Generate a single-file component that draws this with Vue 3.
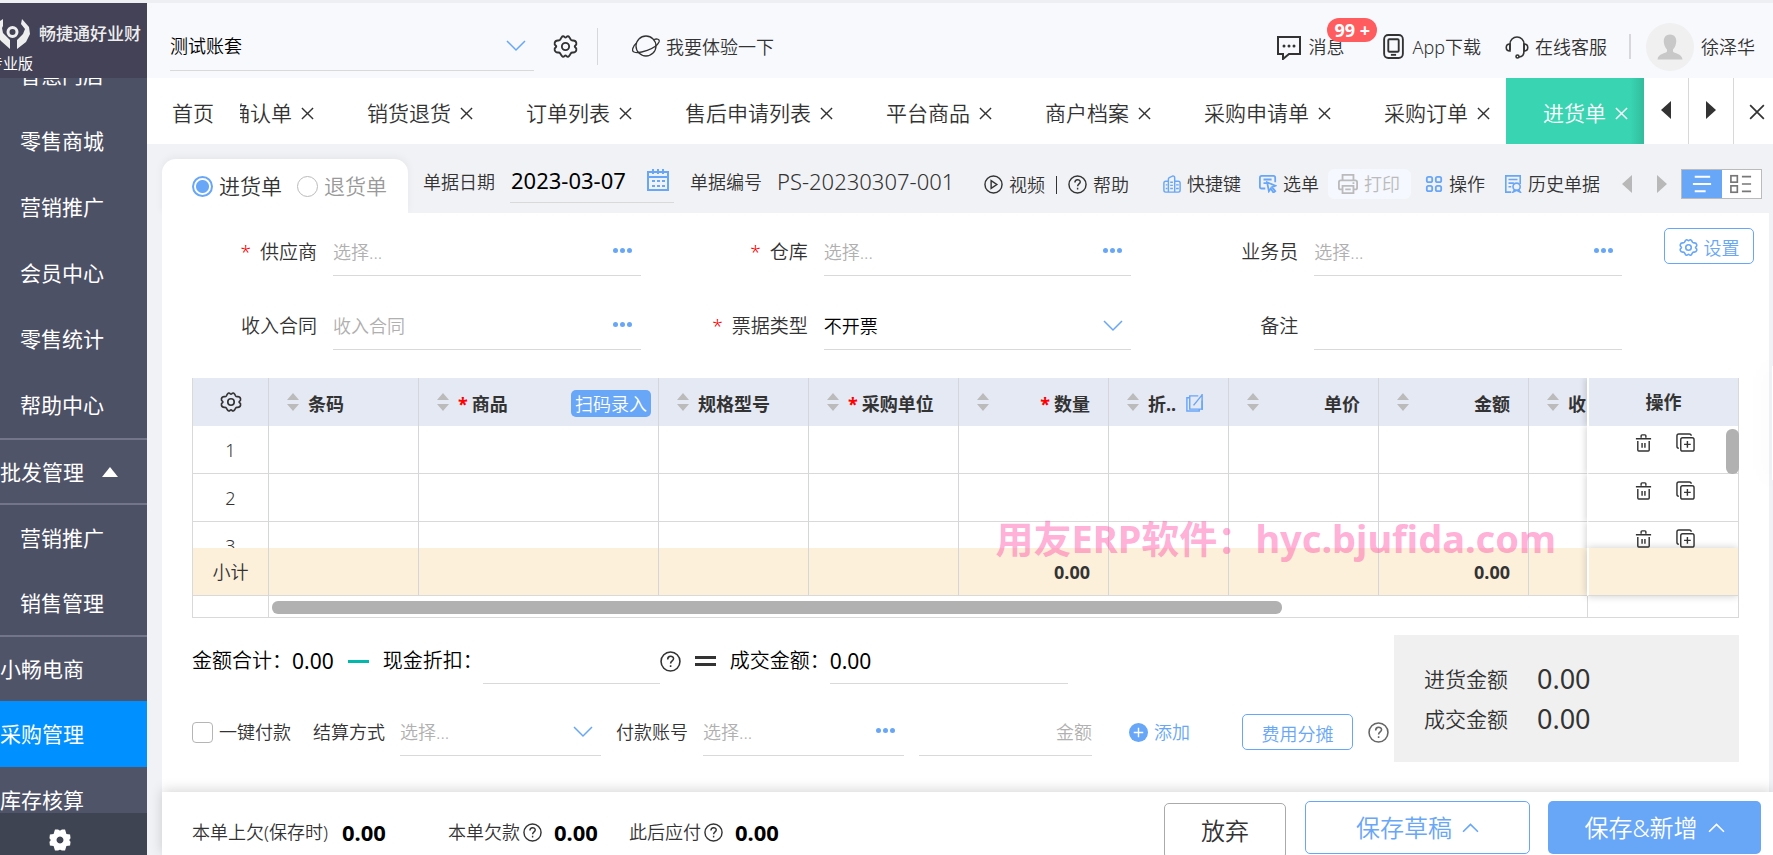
<script setup>
import { ref, h } from 'vue'

const shops = ['智慧门店', '零售商城', '营销推广', '会员中心', '零售统计', '帮助中心']
const wholesale = ['营销推广', '销售管理']
const modules = ['小畅电商', '采购管理', '库存核算']
const tabs = ['确认单', '销货退货', '订单列表', '售后申请列表', '平台商品', '商户档案', '采购申请单', '采购订单', '进货单']
const docType = ref('in')
const date = ref('2023-03-07')
const docNo = ref('PS-20230307-001')
const deal = ref('0.00')
const paid = ref(false)
const rows = [1, 2, 3]

const columns = [
  { label: '条码' },
  { label: '商品', required: true, scan: true },
  { label: '规格型号' },
  { label: '采购单位', required: true },
  { label: '数量', required: true, right: true, total: '0.00' },
  { label: '折..', edit: true },
  { label: '单价', right: true },
  { label: '金额', right: true, total: '0.00' },
  { label: '收' },
]

const shapes = {
  gear: [24, '<path d="M8 3.5Q9.5 1.2 11 2.8 12 3.8 13 2.8 14.5 1.2 16 3.5L17 5.3Q17.600 6.300 19 6.200 21.800 6 22.400 8.500 22.800 10.300 21.400 11.100 20.300 12 21.400 12.900 22.800 13.700 22.400 15.500 21.800 18 19 17.800 17.600 17.700 17 18.700L16 20.500Q14.500 22.800 13 21.200 12 20.200 11 21.200 9.500 22.800 8 20.500L7 18.700Q6.400 17.700 5 17.800 2.200 18 1.600 15.500 1.200 13.700 2.600 12.900 3.700 12 2.600 11.100 1.200 10.300 1.600 8.500 2.200 6 5 6.200 6.400 6.300 7 5.300Z"/><circle cx="12" cy="12" r="3.500"/>'],
  gearFill: [24, '<path fill="currentColor" stroke="none" fill-rule="evenodd" d="M6.500 .5h3.500q2 2 4 0h3.500l1.500 5 4 .5.5 4q-2.500 2 0 4l-.5 4-4 .5-1.500 5H14q-2-2-4 0H6.500L5 18.500l-4-.5-.5-4q2.500-2 0-4L1 6l4-.5zM12 8.200a3.800 3.800 0 1 0 .01 0z"/>'],
  down: [20, '<path d="M1 5l9 9 9-9"/>'],
  up: [16, '<path d="M1 12l7-7 7 7"/>'],
  close: [14, '<path d="M1 1l12 12M13 1L1 13"/>'],
  planet: [28, '<circle cx="14" cy="13" r="10"/><path d="M5 9.500C1 13-1 18 2 19c5 2 22-3 25-10 1-3-2-3.500-5-2.500"/>'],
  chat: [26, '<path d="M2 3h22v17H13l-6 5v-5H2z"/><circle cx="8" cy="12" r="1.500" fill="currentColor" stroke="none"/><circle cx="13" cy="12" r="1.500" fill="currentColor" stroke="none"/><circle cx="18" cy="12" r="1.500" fill="currentColor" stroke="none"/>'],
  phone: [24, '<rect x="3" y="1" width="18" height="22" rx="4"/><rect x="7" y="5" width="10" height="12" rx="1"/><path d="M9.500 20h5"/>'],
  headset: [24, '<path d="M5 15V9a7 7 0 0 1 14 0v7c0 4-2 6-5 6"/><path d="M5 9c-5 0-5 7 0 7zM19 9c5 0 5 7 0 7z"/><circle cx="12.500" cy="21.500" r="1.500"/>'],
  calendar: [22, '<path d="M1 3h20v18H1zM1 8h20"/><path d="M6 0v5M11 0v5M16 0v5M5 12h3M10 12h3M15 12h3M5 17h3M10 17h3M15 17h3"/>'],
  play: [20, '<circle cx="10" cy="10" r="9"/><path d="M7.500 6v8l6-4z"/>'],
  help: [20, '<circle cx="10" cy="10" r="9"/><path d="M7.300 8c0-4 5.600-3.800 5.600-.6 0 2-2.800 2-2.800 4.400M10.100 13.500v1.800"/>'],
  building: [20, '<path d="M6 19H3a2 2 0 0 1-2-2V9a2 2 0 0 1 2-2h3V5a2 2 0 0 1 1-2l4-2q2 0 2 2v16M6 7v12h11a2 2 0 0 0 2-2V9a2 2 0 0 0-2-2h-4"/><path d="M3 11h2M3 15h2M8 8h3M8 11.500h3M8 15h3M14.500 11h3M14.500 15h3"/>'],
  pick: [20, '<path d="M7 15H3a2 2 0 0 1-2-2V3a2 2 0 0 1 2-2h13a2 2 0 0 1 2 2v5M5 5h9M5 9h4"/><path d="M9 8l9 4-3.500 1.500L18 18l-2 1.500-3-4.500-2 3z"/>'],
  printer: [22, '<path d="M5 7V1h12v6M5 17H3a2 2 0 0 1-2-2V9a2 2 0 0 1 2-2h16a2 2 0 0 1 2 2v6a2 2 0 0 1-2 2h-2"/><path d="M5 13h12v8H5zM8 17h6M16 10h2"/>'],
  four: [20, '<rect x="2" y="2" width="6" height="6" rx="2"/><rect x="12" y="2" width="6" height="6" rx="2"/><rect x="2" y="12" width="6" height="6" rx="2"/><rect x="12" y="12" width="6" height="6" rx="2"/>'],
  history: [20, '<path d="M8 19H2V1h16v9M5 5h10M5 9h6M5 13h3"/><circle cx="14" cy="13" r="4"/><path d="M12 16l-2 3 4-2 4 2-2-3"/>'],
  edit: [20, '<path d="M14 3H5v14h13V8M5 5H2v14h13v-2"/><path d="M9 13l9-11M18 1v17"/>'],
  trash: [20, '<path d="M2 6h16M4 8.500V18q0 1 1 1h10q1 0 1-1V8.500M7.500 5V3q0-1 1-1h3q1 0 1 1v2M8.500 10.500v5M11.500 10.500v5"/>'],
  copy: [20, '<rect x="5" y="5" width="14" height="14" rx="2"/><path d="M3 16q-2 0-2-2V3q0-2 2-2h11q2 0 2 2M12 8.500v7M8.500 12h7"/>'],
  lines: [22, '<path d="M3 3h17M1 11h20M3 19h12"/>'],
  list: [24, '<rect x="1" y="3" width="7" height="7"/><rect x="1" y="14" width="7" height="7"/><path d="M13 4h10M13 12h10M13 20h10"/>'],
  left: [18, '<path d="M14 0v18L4 9z" fill="currentColor" stroke="none"/>'],
  right: [18, '<path d="M4 0v18l10-9z" fill="currentColor" stroke="none"/>'],
  plus: [20, '<circle cx="10" cy="10" r="10" fill="currentColor" stroke="none"/><path d="M5 10h10M10 5v10" stroke="#fff"/>'],
}

const Icon = (props) =>
  h('svg', {
    viewBox: `0 0 ${shapes[props.name][0]} ${shapes[props.name][0]}`,
    width: props.size,
    height: props.size,
    fill: 'none',
    stroke: 'currentColor',
    'stroke-width': props.weight || 1.5,
    'aria-hidden': 'true',
    innerHTML: shapes[props.name][1],
  })
Icon.props = ['name', 'size', 'weight']
</script>

<template>
  <div class="page">
    <aside class="side">
      <div class="brand">
        <div class="brand-row">
          <svg class="mark" width="31" height="32" viewBox="0 0 31 32" aria-hidden="true">
            <path d="M3 1v7l-1 2 1 5 7 7v9L1 23l-6-8 2-10z" fill="#eee" />
            <path d="M22 1l7 8 1 7-4 8-9 7v-9l6-6 2-5-4-5z" fill="#eee" />
            <circle cx="12.500" cy="14" r="4.500" fill="none" stroke="#eee" stroke-width="3" />
          </svg>
          <strong>畅捷通好业财</strong>
        </div>
        <span class="edition">专业版</span>
      </div>
      <nav class="menu">
        <a v-for="s in shops" :key="s" href="#" class="sub">{{ s }}</a>
        <a href="#" class="group">批发管理<i class="caret"></i></a>
        <a v-for="s in wholesale" :key="s" href="#" class="sub short">{{ s }}</a>
        <a v-for="(m, i) in modules" :key="m" href="#" class="module" :class="{ first: i === 0, current: i === 1 }">{{ m }}</a>
      </nav>
      <button class="side-foot" aria-label="设置"><Icon name="gearFill" size="22" /></button>
    </aside>

    <div class="main">
      <header class="top">
        <div class="pick account">
          <select aria-label="账套"><option>测试账套</option></select>
          <Icon name="down" size="20" class="blue" />
        </div>
        <button class="plain" aria-label="账套设置"><Icon name="gear" size="25" weight="1.800" /></button>
        <i class="rule tall"></i>
        <a href="#" class="link try"><Icon name="planet" size="28" weight="1.300" />我要体验一下</a>
        <a href="#" class="link msg"><Icon name="chat" size="26" weight="2" />消息<b class="badge">99 +</b></a>
        <a href="#" class="link app"><Icon name="phone" size="25" weight="1.800" />App下载</a>
        <a href="#" class="link service"><Icon name="headset" size="24" weight="1.600" />在线客服</a>
        <i class="rule"></i>
        <a href="#" class="link user">
          <svg width="48" height="48" viewBox="0 0 48 48" aria-hidden="true">
            <circle cx="24" cy="24" r="24" fill="#f0f0f0" />
            <path d="M24 11.500c-5 0-7 4-6 9 .5 3 2 5 3 6v2c-1 2-9 2-9.500 8h25c-.5-6-8.500-6-9.500-8v-2c1-1 2.500-3 3-6 1-5-1-9-6-9z" fill="#c8c8c8" />
          </svg>徐泽华</a>
      </header>

      <nav class="tabs">
        <a href="#" class="home">首页</a>
        <div class="strip">
          <div v-for="(t, i) in tabs" :key="t" class="tab" :class="{ on: i === tabs.length - 1 }">
            <a href="#">{{ t }}</a><button :aria-label="'关闭' + t"><Icon name="close" size="13" /></button>
          </div>
        </div>
        <button class="ctl" aria-label="向左"><Icon name="left" size="18" /></button>
        <button class="ctl" aria-label="向右"><Icon name="right" size="18" /></button>
        <button class="ctl last" aria-label="关闭全部"><Icon name="close" size="16" weight="1.500" /></button>
      </nav>

      <div class="docbar">
        <div class="kinds">
          <label><input v-model="docType" type="radio" value="in" />进货单</label>
          <label class="dim"><input v-model="docType" type="radio" value="back" />退货单</label>
        </div>
        <div class="docinfo">
          <label for="d">单据日期</label>
          <div class="date"><input id="d" v-model="date" /><Icon name="calendar" size="22" weight="2" class="blue" /></div>
          <label for="n">单据编号</label>
          <input id="n" v-model="docNo" class="docno" />
        </div>
        <div class="helps">
          <button><Icon name="play" size="19" />视频</button><i></i>
          <button><Icon name="help" size="19" />帮助</button>
        </div>
        <div class="tools">
          <button class="keys"><Icon name="building" size="18" weight="1.600" class="blue" />快捷键</button>
          <button class="choose"><Icon name="pick" size="18" weight="2" class="blue" />选单</button>
          <button class="print" disabled><Icon name="printer" size="20" weight="2" />打印</button>
          <button class="ops"><Icon name="four" size="18" weight="2" class="blue" />操作</button>
          <button><Icon name="history" size="18" weight="1.800" class="blue" />历史单据</button>
          <button class="step prev" aria-label="上一张"><Icon name="left" size="18" /></button>
          <button class="step" aria-label="下一张"><Icon name="right" size="18" /></button>
          <div class="views">
            <button class="on" aria-label="表单视图"><Icon name="lines" size="20" weight="2" /></button>
            <button aria-label="列表视图"><Icon name="list" size="22" weight="1.800" /></button>
          </div>
        </div>
      </div>

      <main class="sheet">
        <div class="head">
          <div class="fields">
            <div class="field"><label for="f1"><em>*</em>供应商</label><div class="box"><input id="f1" placeholder="选择..." /><button class="dots" aria-label="选择供应商"><i></i><i></i><i></i></button></div></div>
            <div class="field"><label for="f2"><em>*</em>仓库</label><div class="box"><input id="f2" placeholder="选择..." /><button class="dots" aria-label="选择仓库"><i></i><i></i><i></i></button></div></div>
            <div class="field"><label for="f3">业务员</label><div class="box"><input id="f3" placeholder="选择..." /><button class="dots" aria-label="选择业务员"><i></i><i></i><i></i></button></div></div>
            <div class="field"><label for="f4">收入合同</label><div class="box"><input id="f4" placeholder="收入合同" /><button class="dots" aria-label="选择合同"><i></i><i></i><i></i></button></div></div>
            <div class="field"><label for="f5"><em>*</em>票据类型</label><div class="pick box"><select id="f5"><option>不开票</option></select><Icon name="down" size="20" class="blue" /></div></div>
            <div class="field"><label for="f6">备注</label><div class="box"><input id="f6" /></div></div>
          </div>
          <button class="outline config"><Icon name="gear" size="19" weight="2" />设置</button>
        </div>

        <div class="gridwrap">
          <table>
            <thead>
              <tr>
                <th class="no"><button class="plain" aria-label="列设置"><Icon name="gear" size="22" weight="1.800" /></button></th>
                <th v-for="c in columns" :key="c.label" :class="{ right: c.right }">
                  <span class="sort"><i></i><i></i></span>
                  <span class="name"><em v-if="c.required">*</em>{{ c.label }}</span>
                  <button v-if="c.scan" class="scan">扫码录入</button>
                  <Icon v-if="c.edit" name="edit" size="19" weight="1.500" class="blue" />
                </th>
                <th class="act">操作</th>
              </tr>
            </thead>
            <tbody>
              <tr v-for="r in rows" :key="r">
                <td class="no">{{ r }}</td>
                <td v-for="c in columns" :key="c.label"></td>
                <td class="act">
                  <button class="plain" aria-label="删除行"><Icon name="trash" size="19" /></button>
                  <button class="plain" aria-label="复制行"><Icon name="copy" size="19" /></button>
                </td>
              </tr>
            </tbody>
            <tfoot>
              <tr>
                <td class="no">小计</td>
                <td v-for="c in columns" :key="c.label" class="sum">{{ c.total }}</td>
                <td class="act"></td>
              </tr>
            </tfoot>
          </table>
          <div class="hscroll"><span></span><div><i></i></div><span></span></div>
          <i class="vthumb"></i>
          <div class="mark-text">用友ERP软件：<span>hyc.bjufida.com</span></div>
        </div>

        <div class="settle">
          <div class="lines">
            <div class="calc">
              <span>金额合计：</span><output>0.00</output><i class="minus"></i>
              <label for="c1">现金折扣：</label><input id="c1" class="cash" />
              <Icon name="help" size="21" weight="1.500" /><i class="equal"></i>
              <label for="c2">成交金额：</label><input id="c2" v-model="deal" class="deal" />
            </div>
            <div class="pay">
              <label class="tick"><input v-model="paid" type="checkbox" />一键付款</label>
              <label for="p1" class="way">结算方式</label>
              <div class="pick box w200 empty"><select id="p1"><option>选择...</option></select><Icon name="down" size="20" class="blue" /></div>
              <label for="p2" class="acct">付款账号</label>
              <div class="box w200"><input id="p2" placeholder="选择..." /><button class="dots" aria-label="选择账号"><i></i><i></i><i></i></button></div>
              <div class="box amount"><input placeholder="金额" aria-label="金额" /></div>
              <button class="add"><Icon name="plus" size="19" />添加</button>
              <button class="outline share">费用分摊</button>
              <Icon name="help" size="21" weight="1.500" class="gray" />
            </div>
          </div>
          <dl class="totals">
            <div><dt>进货金额</dt><dd>0.00</dd></div>
            <div><dt>成交金额</dt><dd>0.00</dd></div>
          </dl>
        </div>
      </main>

      <footer class="foot">
        <span>本单上欠(保存时)</span><b class="g1">0.00</b>
        <span>本单欠款</span><Icon name="help" size="19" weight="1.500" /><b class="g2">0.00</b>
        <span>此后应付</span><Icon name="help" size="19" weight="1.500" /><b>0.00</b>
        <div class="acts">
          <button class="drop">放弃</button>
          <button class="draft">保存草稿<Icon name="up" size="17" /></button>
          <button class="save">保存&amp;新增<Icon name="up" size="17" /></button>
        </div>
      </footer>
    </div>
    <i class="float"></i>
  </div>
</template>

<style>
body { margin: 0; background: #fff; }
</style>

<style scoped>
* { box-sizing: border-box; }
.page {
  display: flex; height: 100vh; overflow: hidden; position: relative; border-top: 3px solid #eeeff2;
  font: 350 18px/26px "Noto Sans", "Noto Sans CJK SC", sans-serif; color: #333;
}
a { color: inherit; text-decoration: none; }
button, input, select { font: inherit; color: inherit; border: 0; background: none; padding: 0; margin: 0; outline: 0; min-width: 0; }
button { display: inline-flex; align-items: center; justify-content: center; gap: 6px; white-space: nowrap; flex: none; }
label, span { white-space: nowrap; }
:deep(svg), svg { display: block; flex: none; }
.blue { color: #68a6f8; }
.gray { color: #666; }
em { font-style: normal; color: #f00; }
input::placeholder { color: #b0b0b0; opacity: 1; }

.side { width: 147px; flex: none; display: flex; flex-direction: column; background: #4d5166; color: #fff; font-weight: 400; }
.brand { height: 75px; flex: none; background: #434257; overflow: hidden; position: relative; z-index: 1; padding-top: 14px; }
.brand-row { display: flex; align-items: center; gap: 8px; height: 34px; }
.brand strong { font-size: 17px; font-weight: 500; color: #eee; white-space: nowrap; }
.edition { display: block; margin-left: -12px; font-size: 15px; line-height: 24px; }
.menu { flex: 1; min-height: 0; display: flex; flex-direction: column; overflow: hidden; font-size: 21px; }
.menu a { flex: none; height: 66px; display: flex; align-items: center; }
.menu .sub { padding-left: 20px; }
.menu .sub:first-child { margin-top: -36px; }
.menu .short { height: 65px; }
.menu .group { height: 67px; background: #505469; border-top: 2px solid #73768a; border-bottom: 2px solid #73768a; }
.menu .module { background: #505469; }
.menu .first { border-top: 2px solid #73768a; }
.menu .current { background: #0090ff; }
.caret { margin-left: 18px; border: 8px solid transparent; border-top: 0; border-bottom: 10px solid #fff; }
.side-foot { height: 42px; background: #3f4452; justify-content: flex-start; padding: 12px 0 0 49px; overflow: hidden; }

.main { flex: 1; min-width: 0; display: flex; flex-direction: column; background: #f1f2f5; }
.top { height: 75px; flex: none; display: flex; align-items: center; padding: 12px 18px 0 23px; background: #f7f9fd; }
.pick { position: relative; display: flex; align-items: center; }
.pick select { appearance: none; width: 100%; height: 100%; }
.pick svg { position: absolute; right: 8px; pointer-events: none; }
.account { width: 364px; height: 48px; border-bottom: 1px solid #d9d9d9; color: #000; margin-right: 19px; }
.rule { width: 2px; height: 25px; background: #d8d8dc; margin: 0 15px 0 22px; }
.tall { width: 1px; height: 37px; margin: 0 34px 0 19px; }
.link { display: flex; align-items: center; gap: 6px; white-space: nowrap; }
.msg { margin-left: auto; position: relative; margin-right: 37px; }
.app { margin-right: 24px; }
.link.user { gap: 7px; }
.badge { position: absolute; left: 51px; top: -16px; height: 24px; padding: 0 7px; border-radius: 12px; background: #ff5c5f; color: #fff; font-size: 18px; line-height: 24px; font-weight: 700; }

.tabs { height: 66px; flex: none; display: flex; background: #fff; font-size: 21px; }
.home { width: 93px; flex: none; padding-left: 25px; line-height: 71px; }
.strip { flex: 1; min-width: 0; overflow: hidden; display: flex; justify-content: flex-end; }
.tab { flex: none; display: flex; align-items: center; gap: 9px; padding: 4px 16px 0 37px; white-space: nowrap; }
.tab.on { background: linear-gradient(90deg, transparent 90%, #32bc9d), #39d5b2; color: #fff; }
.ctl { width: 45px; border-right: 1px solid #d8d8d8; padding-bottom: 2px; }
.ctl.last { width: 39px; border: 0; padding: 2px 0 0 6px; }

.docbar { height: 69px; flex: none; display: flex; align-items: flex-end; padding: 0 11px 0 15px; }
.kinds { width: 246px; height: 54px; flex: none; background: #fff; border-radius: 14px 14px 0 0; box-shadow: 0 -2px 8px rgba(0, 0, 0, .05); display: flex; align-items: center; padding-left: 30px; gap: 15px; font-size: 21px; }
.kinds label { display: flex; align-items: center; gap: 6px; }
.dim { color: #999; }
.kinds input { appearance: none; width: 21px; height: 21px; border: 1px solid #bbb; border-radius: 50%; background: #fff; }
.kinds input:checked { border: 2px solid #68a6f8; background: radial-gradient(#68a6f8 0 6px, #fff 7px); }
.docinfo { display: flex; align-items: center; height: 41px; margin: 0 0 10px 15px; }
.docinfo label { padding-bottom: 1px; }
.date { display: flex; align-items: center; width: 164px; height: 41px; margin: 0 16px 0 15px; padding: 0 5px 4px 1px; border-bottom: 1px solid #d9d9d9; }
.date input { flex: 1; font-size: 22px; font-weight: 400; color: #000; }
.docno { width: 186px; margin-left: 15px; padding-bottom: 4px; font-size: 22px; }
.helps, .tools { display: flex; align-items: center; height: 54px; padding-bottom: 5px; }
.helps { margin-left: 21px; gap: 11px; padding-bottom: 3px; }
.helps i { width: 1px; height: 18px; background: #333; }
.tools { margin-left: auto; }
.keys { margin-right: 18px; }
.choose { margin-right: 9px; }
.print { height: 30px; padding: 0 11px 0 10px; margin-right: 14px; border-radius: 6px; background: #f5f8fe; color: #bbb; }
.ops { margin-right: 19px; }
.step { width: 18px; color: #b8b8b8; margin-right: 10px; }
.prev { margin: 0 17px 0 18px; }
.views { display: flex; width: 81px; height: 30px; border: 1px solid #bbb; background: #fff; }
.views button { flex: 1; color: #777; }
.views .on { background: #68a6f8; color: #fff; }

.sheet { flex: 1; min-height: 0; overflow: hidden; margin: 0 4px 0 15px; background: #fff; }
.head { display: flex; padding: 15px 15px 0 0; }
.fields { flex: 1; display: grid; grid-template-columns: repeat(3, 1fr); row-gap: 26px; margin-right: 30px; }
.field { display: flex; align-items: center; padding-right: 12px; }
.field label { width: 155px; flex: none; text-align: right; margin-right: 16px; font-size: 19px; }
.field em { margin-right: 9px; }
.box { height: 48px; flex: 1; min-width: 0; display: flex; align-items: center; border-bottom: 1px solid #d9d9d9; }
.box input { flex: 1; }
.box select { color: #000; }
.empty select { color: #b0b0b0; }
.dots { gap: 2px; padding: 8px 9px 10px 0; }
.dots i { width: 5px; height: 5px; border-radius: 50%; background: #68a6f8; }
.outline { height: 36px; border: 1px solid #68a6f8; border-radius: 5px; color: #68a6f8; background: #fff; padding-top: 3px; }
.config { width: 90px; }

.gridwrap { position: relative; margin: 28px 30px 0; height: 240px; border: 1px solid #d9d9d9; border-top: 0; }
table, thead, tbody, tfoot { display: block; }
tbody { height: 122px; overflow: clip; }
tr { display: grid; height: 48px; grid-template-columns: 76px 150px 240px 150px 150px 150px 120px 150px 150px minmax(0, 1fr) 151px; }
th, td { border-right: 1px solid #d4d6da; border-bottom: 1px solid #d9d9d9; padding: 0; display: flex; align-items: center; overflow: hidden; }
th { background: #e5e9f4; border-bottom: 0; padding: 0 7px 0 18px; font-weight: 700; gap: 9px; }
th.right { justify-content: space-between; padding-right: 18px; }
th .name { padding-top: 4px; }
th .name em { margin-right: 4px; }
.no { justify-content: center; padding: 0; }
th:nth-last-child(2), td:nth-last-child(2) { border-right: 0; }
.sort { display: grid; gap: 4px; }
.sort i { border: 6px solid transparent; border-top: 0; border-bottom: 7px solid #bbb; }
.sort i + i { border-bottom: 0; border-top: 7px solid #bbb; }
.scan { height: 27px; margin: 3px 0 0 auto; padding: 0 4px; border-radius: 5px; background: #68a6f8; color: #fff; font-weight: 350; }
.act { justify-content: center; border-right: 0; overflow: visible; position: relative; box-shadow: -2px 0 6px rgba(0, 0, 0, .14); clip-path: inset(0 0 0 -10px); background: #fff; border-left: 2px solid #fff; }
th.act { background: #e5e9f4; padding: 0; }
tbody .act { gap: 23px; padding: 0 0 14px 2px; }
tfoot td { background: #fcf0db; }
tfoot .act { background: #fcf0db; box-shadow: 0 0 8px rgba(0, 0, 0, .2); clip-path: inset(-8px 0 -8px -8px); }
tfoot td:not(.no):not(.act) { justify-content: flex-end; padding-right: 18px; font-weight: 700; }
.hscroll { display: flex; height: 22px; }
.hscroll span { width: 76px; border-right: 1px solid #d9d9d9; }
.hscroll span:last-child { width: 151px; border-right: 0; border-left: 1px solid #d9d9d9; }
.hscroll div { flex: 1; padding: 5px 3px; }
.hscroll i { display: block; width: 77%; height: 13px; border-radius: 6px; background: #b1b1b1; }
.vthumb { position: absolute; right: -1px; top: 51px; width: 13px; height: 45px; border-radius: 6px; background: #b1b1b1; }
.mark-text { position: absolute; right: 182px; top: 138px; font: 700 38px/44px "Noto Sans", "Noto Sans CJK SC", sans-serif; color: rgba(255, 78, 168, .46); white-space: nowrap; pointer-events: none; }

.settle { display: flex; justify-content: space-between; margin: 17px 30px 0; }
.lines { padding-top: 3px; }
.calc, .pay { display: flex; align-items: center; }
.calc { height: 46px; font-size: 20px; color: #000; }
.calc output { font-size: 21px; font-weight: 400; }
.calc svg { color: #333; }
.minus { width: 21px; height: 3px; background: #00b8ac; margin: 0 14px; }
.calc input { height: 46px; border-bottom: 1px solid #d9d9d9; font-size: 21px; font-weight: 400; }
.cash { width: 177px; }
.equal { width: 21px; height: 10px; border: solid #333; border-width: 3px 0; margin: 0 14px; }
.deal { width: 238px; }
.pay { margin-top: 24px; }
.tick { display: flex; align-items: center; gap: 6px; }
.tick input { appearance: none; width: 21px; height: 21px; border: 1px solid #b5b5b5; border-radius: 4px; }
.way { margin: 0 15px 0 22px; }
.acct { margin: 0 15px; }
.w200 { flex: none; width: 201px; }
.amount { flex: none; width: 173px; margin-left: 15px; }
.amount input { text-align: right; }
.add { margin: 0 52px 0 37px; color: #68a6f8; }
.share { width: 111px; margin-right: 15px; }
.totals { width: 345px; height: 127px; margin: 0; padding: 24px 30px; background: #f0f0f0; }
.totals div { display: flex; align-items: center; height: 40px; gap: 29px; }
.totals dt { font-size: 21px; white-space: nowrap; }
.totals dd { margin: 0; font-size: 27px; font-weight: 400; }

.foot { height: 63px; flex: none; margin-left: 15px; padding: 17px 12px 0 30px; display: flex; align-items: center; background: #fff; box-shadow: 0 -2px 12px rgba(0, 0, 0, .16); position: relative; }
.foot b { font-size: 22px; color: #000; margin-left: 12px; }
.foot svg { margin-left: 3px; }
.foot .g1 { margin: 0 62px 0 14px; }
.foot .g2 { margin-right: 31px; }
.acts { margin: -17px 0 0 auto; padding-top: 9px; height: 63px; align-self: flex-start; display: flex; font-size: 24px; }
.acts button { height: 53px; border-radius: 5px; gap: 7px; }
.acts .drop { width: 122px; height: 56px; margin: 2px 19px 0 0; border: 1px solid #aaa; }
.acts .draft { width: 225px; margin-right: 18px; border: 1px solid #68a6f8; color: #68a6f8; }
.acts .save { width: 213px; background: #68a6f8; color: #fff; }
.float { position: absolute; right: 0; top: 363px; width: 1px; height: 114px; background: #fff; box-shadow: 0 0 24px rgba(0, 0, 0, .3); }
</style>
